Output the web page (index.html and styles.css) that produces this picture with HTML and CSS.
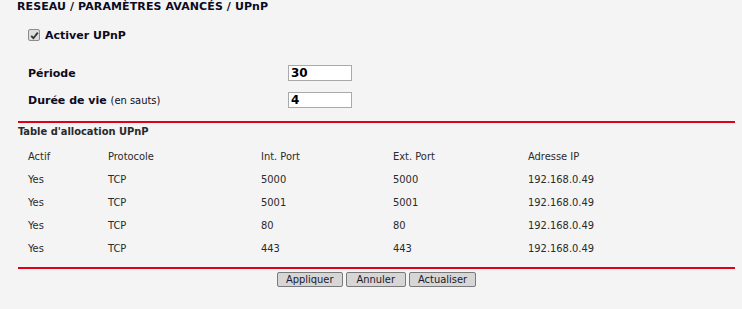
FILE: index.html
```html
<!DOCTYPE html>
<html>
<head>
<meta charset="utf-8">
<title>UPnP</title>
<link rel="stylesheet" href="styles.css">
</head>
<body>
<div class="page">
  <h1 class="title">RESEAU / PARAMÈTRES AVANCÉS / UPnP</h1>

  <label class="check">
    <span class="box"><svg width="9" height="9" viewBox="0 0 9 9"><path d="M1.2 4.8 L3.4 7.2 L7.8 1.6" fill="none" stroke="#333" stroke-width="1.8"/></svg></span>
    Activer UPnP
  </label>

  <div class="fields">
    <div class="field">
      <span class="lbl">Période</span>
      <input class="inp" type="text" value="30">
    </div>
    <div class="field">
      <span class="lbl">Durée de vie <span class="note">(en sauts)</span></span>
      <input class="inp" type="text" value="4">
    </div>
  </div>

  <div class="rule"></div>

  <h2 class="sub">Table d'allocation UPnP</h2>

  <div class="grid">
    <div class="row">
      <span>Actif</span><span>Protocole</span><span>Int. Port</span><span>Ext. Port</span><span>Adresse IP</span>
    </div>
    <div class="row">
      <span>Yes</span><span>TCP</span><span>5000</span><span>5000</span><span>192.168.0.49</span>
    </div>
    <div class="row">
      <span>Yes</span><span>TCP</span><span>5001</span><span>5001</span><span>192.168.0.49</span>
    </div>
    <div class="row">
      <span>Yes</span><span>TCP</span><span>80</span><span>80</span><span>192.168.0.49</span>
    </div>
    <div class="row">
      <span>Yes</span><span>TCP</span><span>443</span><span>443</span><span>192.168.0.49</span>
    </div>
  </div>

  <div class="rule rule-bottom"></div>

  <div class="buttons">
    <button class="btn">Appliquer</button>
    <button class="btn btn-short">Annuler</button>
    <button class="btn">Actualiser</button>
  </div>
</div>
</body>
</html>
```

FILE: styles.css
```css
* {
  padding: 0px;
  margin: 0px;
  box-sizing: border-box;
}
body {
  background-color: #f4f4f4;
  color: #1c1c28;
  font-family: "DejaVu Sans Condensed", "DejaVu Sans", sans-serif;
  font-size: 11px;
}
.page {
  width: 742px;
  height: 309px;
  padding: 0px 7px 0px 18px;
}
.title {
  font-family: "DejaVu Sans", sans-serif;
  font-size: 11px;
  font-weight: bold;
  line-height: 14px;
  letter-spacing: 0.1px;
  color: #0b0b22;
  margin-left: -1px;
}
.check {
  display: flex;
  align-items: center;
  gap: 5px;
  margin: 15px 0px 0px 10px;
  height: 12px;
  font-family: "DejaVu Sans", sans-serif;
  font-weight: bold;
  color: #0b0b22;
}
.box {
  width: 12px;
  height: 12px;
  border: 1px solid #8c8c8c;
  border-radius: 2px;
  background-color: #dedede;
  display: flex;
  align-items: center;
  justify-content: center;
}
.fields {
  margin: 24px 0px 0px 10px;
  display: flex;
  flex-direction: column;
  gap: 11px;
}
.field {
  display: flex;
  align-items: center;
  height: 16px;
}
.lbl {
  width: 260px;
  font-family: "DejaVu Sans", sans-serif;
  font-weight: bold;
  color: #0b0b22;
}
.note {
  font-family: "DejaVu Sans Condensed", sans-serif;
  font-weight: normal;
}
.inp {
  width: 64px;
  height: 16px;
  border: 1px solid #a9a9a9;
  background-color: #ffffff;
  font-family: "DejaVu Sans", sans-serif;
  font-size: 12px;
  font-weight: bold;
  color: #000;
  padding: 0px 2px;
  outline: none;
}
.rule {
  height: 2px;
  background-color: #e0001b;
  margin-top: 13px;
}
.sub {
  font-size: 11px;
  font-weight: bold;
  line-height: 18px;
  color: #2a2a2a;
  margin-bottom: 4px;
}
.row {
  display: grid;
  grid-template-columns: 80px 153px 132px 135px 1fr;
  height: 23px;
  align-items: center;
  padding-left: 10px;
  color: #2a2a2a;
}
.rule-bottom {
  margin-top: 7px;
}
.buttons {
  display: flex;
  justify-content: center;
  gap: 3px;
  margin-top: 3px;
}
.btn {
  height: 15px;
  padding: 0px 8px;
  font-family: "DejaVu Sans Condensed", sans-serif;
  font-size: 11px;
  line-height: 13px;
  color: #1a1a2a;
  background-color: #d6d6d6;
  border: 1px solid #7a7a7a;
  border-radius: 2px;
}
.btn-short {
  padding: 0px 10px;
}
```
